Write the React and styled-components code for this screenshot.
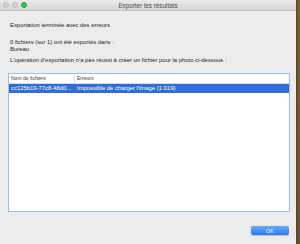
import React from "react";
import styled, { createGlobalStyle } from "styled-components";

const Global = createGlobalStyle`
  html, body { margin: 0; padding: 0; }
  body { font-family: "Liberation Sans", Arial, sans-serif; }
`;

const Screen = styled.div`
  width: 300px;
  height: 244px;
  display: flex;
  overflow: hidden;
`;

const Window = styled.div`
  width: 296px;
  display: flex;
  flex-direction: column;
  background: #ececec;
  border-right: 1px solid #5a4326;
`;

const Desktop = styled.div`
  flex: 1;
  background: linear-gradient(180deg, #7a5a32, #6a4e2c);
`;

const TitleBar = styled.div`
  position: relative;
  height: 10px;
  display: flex;
  align-items: center;
  justify-content: center;
  background: linear-gradient(180deg, #ebebeb, #d5d5d5);
  border-bottom: 1px solid #c4c4c4;
  font-size: 6.3px;
  color: #4a4a4a;
`;

const Lights = styled.div`
  position: absolute;
  left: 3px;
  top: 2px;
  display: flex;
  gap: 3px;
`;

const Light = styled.span`
  width: 6px;
  height: 6px;
  border-radius: 50%;
  box-sizing: border-box;
  background: ${(p) => (p.$on ? "#2dc83e" : "#d3d3d3")};
  border: 0.5px solid ${(p) => (p.$on ? "#1fa52d" : "#bdbdbd")};
`;

const Body = styled.div`
  flex: 1;
  display: flex;
  flex-direction: column;
  padding: 10px 6px 9px 8px;
  font-size: 5.9px;
  color: #1e1e1e;
`;

const Line = styled.div`
  padding-left: 2px;
  line-height: 7px;
  margin-top: ${(p) => p.$mt || 0}px;
`;

const Table = styled.div`
  margin-top: 9px;
  height: 139px;
  box-sizing: border-box;
  border: 1.5px solid #98bff3;
  background: #fff;
  display: flex;
  flex-direction: column;
`;

const Row = styled.div`
  display: grid;
  grid-template-columns: 66px 1fr;
  height: 9px;
  align-items: center;
  background: ${(p) => (p.$sel ? "#2f6dd9" : "#fff")};
  color: ${(p) => (p.$sel ? "#fff" : "#3a3a3a")};
  border-bottom: ${(p) => (p.$head ? "1px solid #dcdcdc" : "none")};
  font-size: ${(p) => (p.$head ? "5px" : "5.9px")};
`;

const Cell = styled.div`
  padding-left: 2px;
  white-space: nowrap;
  overflow: hidden;
  line-height: 9px;
  border-right: ${(p) => (p.$div ? "1px solid #dcdcdc" : "none")};
`;

const Footer = styled.div`
  margin-top: auto;
  display: flex;
  justify-content: flex-end;
  padding-right: 1px;
`;

const Button = styled.div`
  width: 38px;
  height: 9px;
  border-radius: 2px;
  background: linear-gradient(180deg, #6aacfb, #2d78f4);
  color: #fff;
  font-size: 5.4px;
  display: flex;
  align-items: center;
  justify-content: center;
  box-shadow: 0 0.5px 1px rgba(0, 0, 0, 0.2);
`;

export default function App() {
  return (
    <Screen>
      <Global />
      <Window>
        <TitleBar>
          <Lights>
            <Light />
            <Light />
            <Light $on />
          </Lights>
          Exporter les résultats
        </TitleBar>
        <Body>
          <Line $mt={1}>Exportation terminée avec des erreurs</Line>
          <Line $mt={10}>0 fichiers (sur 1) ont été exportés dans :</Line>
          <Line>Bureau</Line>
          <Line $mt={4}>
            L'opération d'exportation n'a pas réussi à créer un fichier pour la photo ci-dessous :
          </Line>
          <Table>
            <Row $head>
              <Cell $div>Nom de fichiers</Cell>
              <Cell>Erreurs</Cell>
            </Row>
            <Row $sel>
              <Cell>cc125b19-77c8-48d0...</Cell>
              <Cell>Impossible de charger l'image (1 019)</Cell>
            </Row>
          </Table>
          <Footer>
            <Button>OK</Button>
          </Footer>
        </Body>
      </Window>
      <Desktop />
    </Screen>
  );
}
